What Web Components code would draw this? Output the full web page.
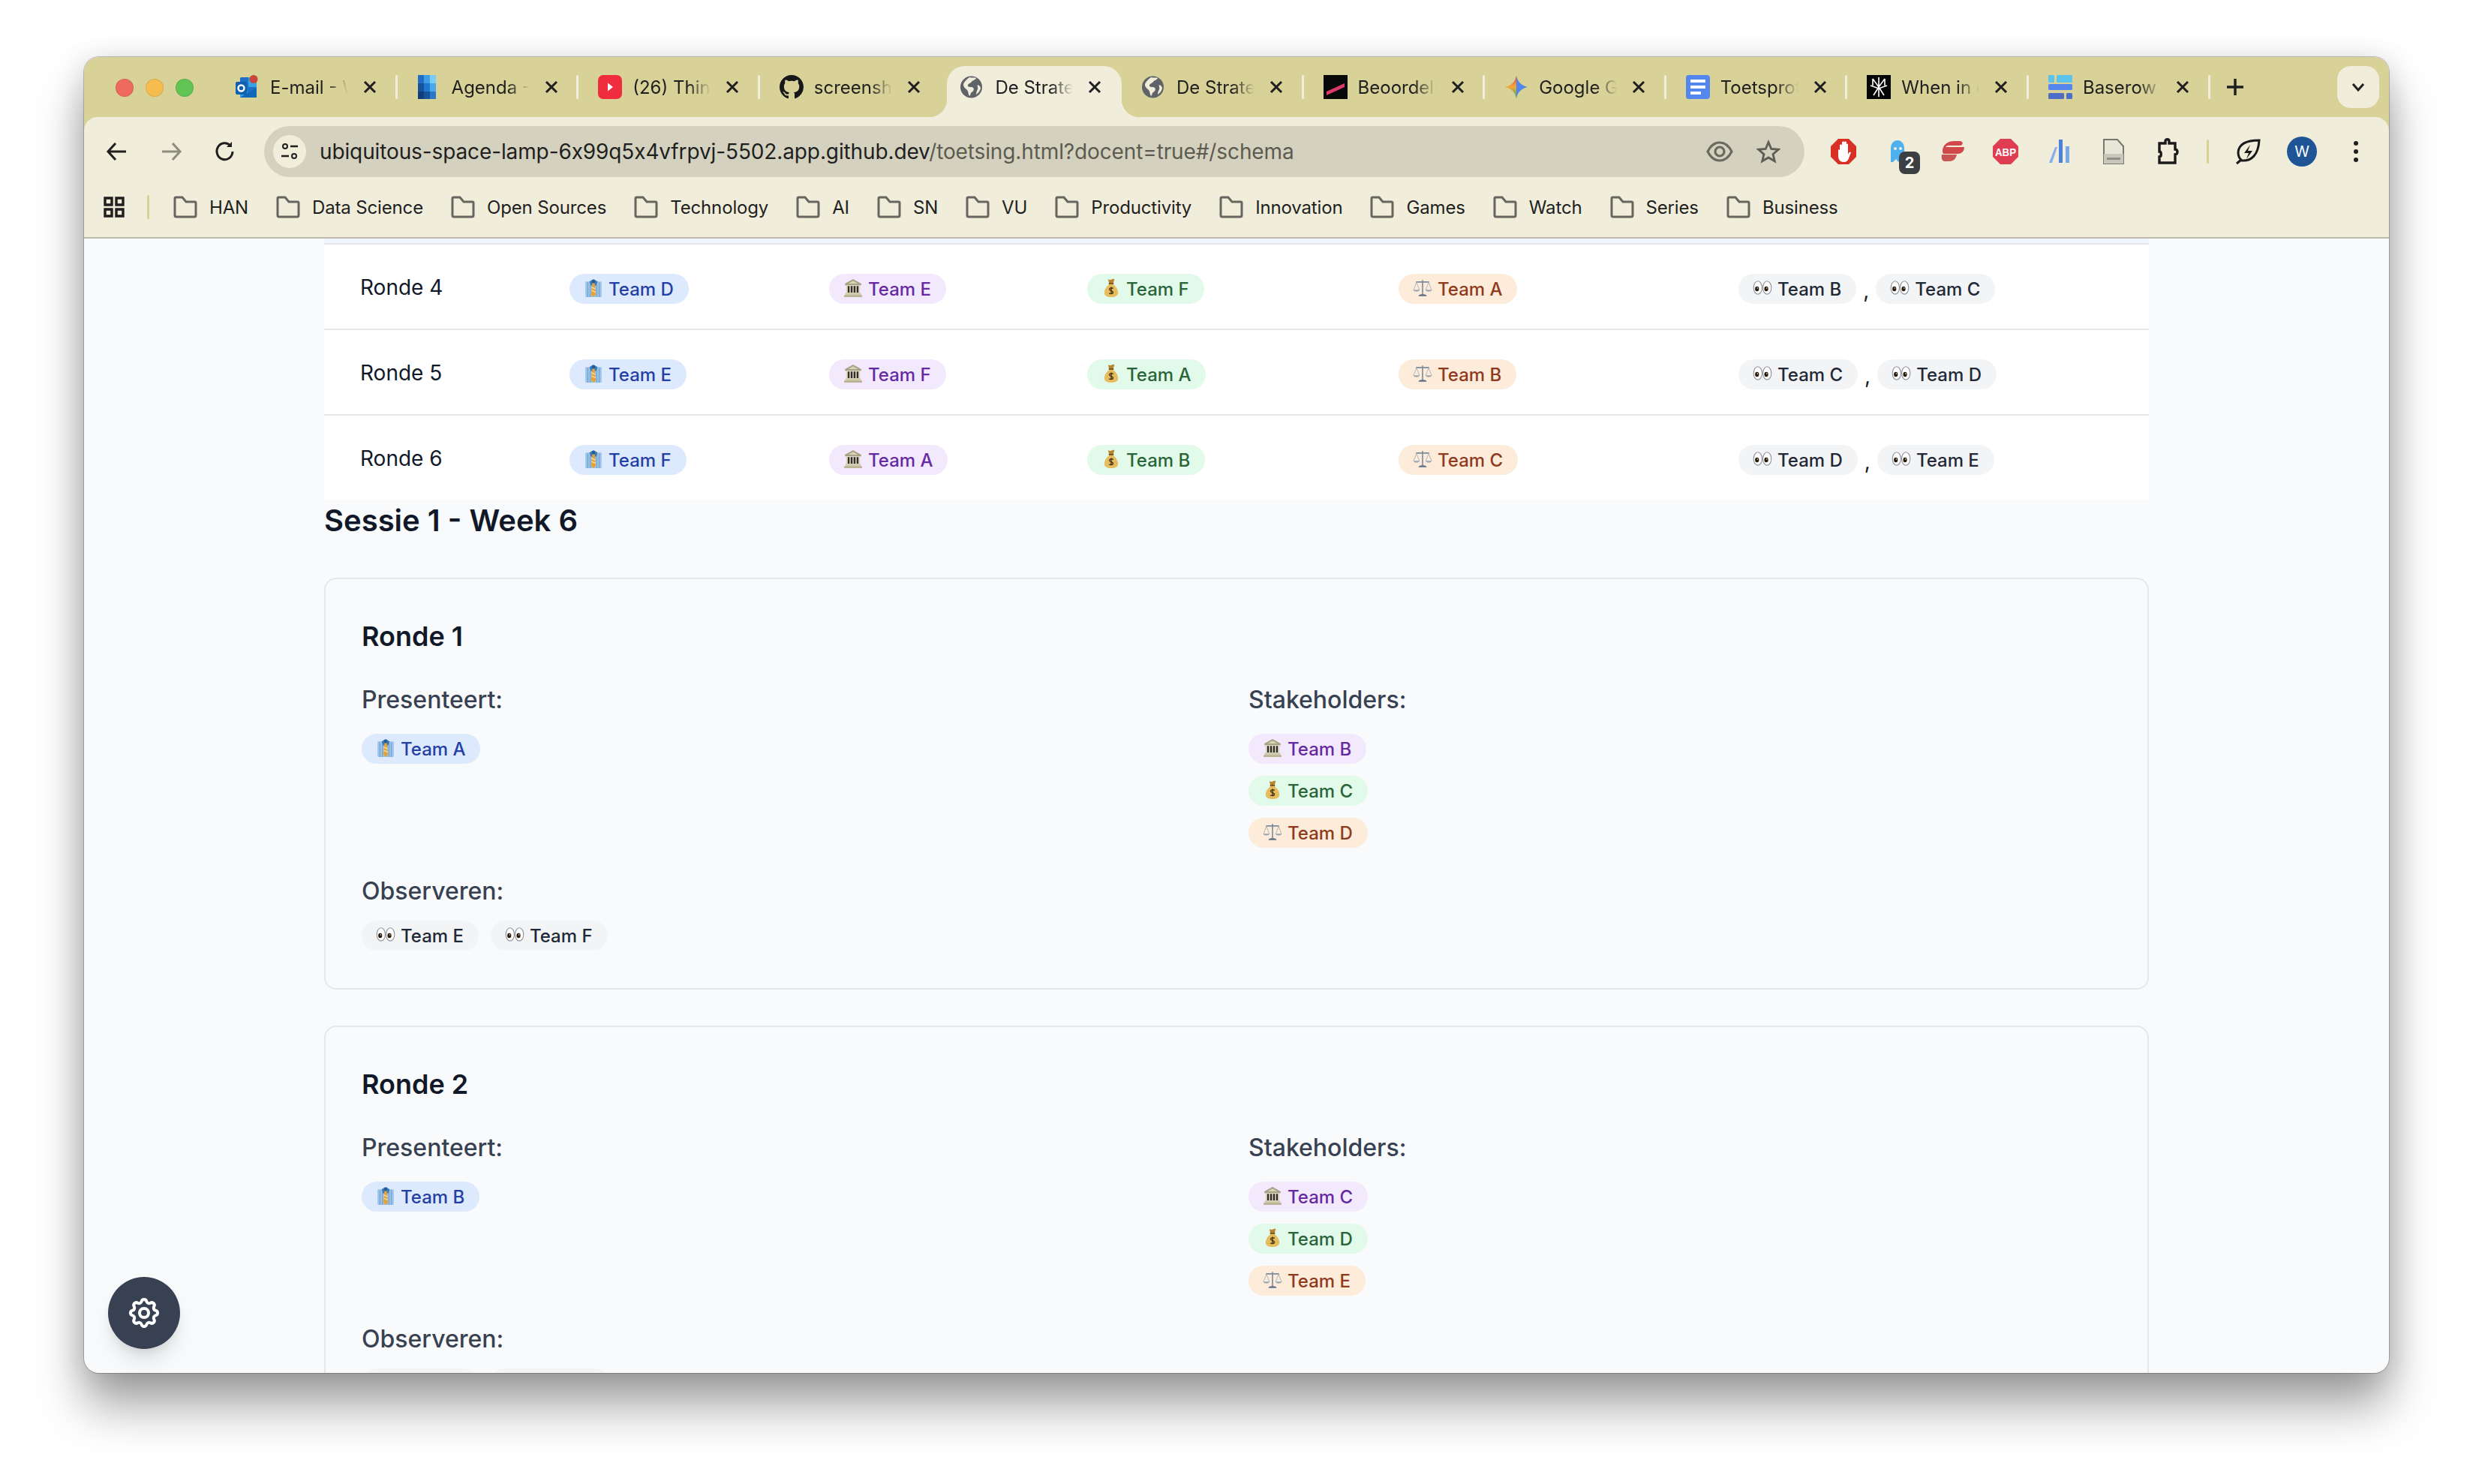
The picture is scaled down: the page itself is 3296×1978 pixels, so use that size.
<!DOCTYPE html>
<html lang="nl">
<head>
<meta charset="utf-8">
<title>De Strategie</title>
<style>
    html, body { margin: 0; background: #fff; }
    body { font-family: Inter, "Noto Sans", sans-serif; }
</style>
</head>
<body>
<browser-desktop>
  <browser-window>
    <tab-strip slot="tabs">
      <browser-tab icon="outlook" sep>E-mail - W</browser-tab>
      <browser-tab icon="agenda" sep>Agenda - W</browser-tab>
      <browser-tab icon="youtube" sep>(26) Thinking</browser-tab>
      <browser-tab icon="github">screenshot</browser-tab>
      <browser-tab icon="globe" active>De Strategie</browser-tab>
      <browser-tab icon="globe" sep>De Strategie</browser-tab>
      <browser-tab icon="beoordel" sep>Beoordeling</browser-tab>
      <browser-tab icon="gemini" sep>Google Gemini</browser-tab>
      <browser-tab icon="docs" sep>Toetsprotocol</browser-tab>
      <browser-tab icon="spider" sep>When in doubt</browser-tab>
      <browser-tab icon="baserow" sep>Baserow</browser-tab>
    </tab-strip>
    <browser-toolbar slot="toolbar">ubiquitous-space-lamp-6x99q5x4vfrpvj-5502.app.github.dev</browser-toolbar>
    <bookmark-bar slot="bookmarks">
      <book-mark>HAN</book-mark>
      <book-mark>Data Science</book-mark>
      <book-mark>Open Sources</book-mark>
      <book-mark>Technology</book-mark>
      <book-mark>AI</book-mark>
      <book-mark>SN</book-mark>
      <book-mark>VU</book-mark>
      <book-mark>Productivity</book-mark>
      <book-mark>Innovation</book-mark>
      <book-mark>Games</book-mark>
      <book-mark>Watch</book-mark>
      <book-mark>Series</book-mark>
      <book-mark>Business</book-mark>
    </bookmark-bar>

    <schedule-page>
      <round-table>
        <round-row name="Ronde 4" teams="D,E,F,A,B,C"></round-row>
        <round-row name="Ronde 5" teams="E,F,A,B,C,D"></round-row>
        <round-row name="Ronde 6" teams="F,A,B,C,D,E"></round-row>
      </round-table>
      <session-title>Sessie 1 - Week 6</session-title>
      <round-card name="Ronde 1" teams="A,B,C,D,E,F"></round-card>
      <round-card name="Ronde 2" teams="B,C,D,E,F,A"></round-card>
    </schedule-page>

    <settings-fab slot="overlay"></settings-fab>
  </browser-window>
</browser-desktop>

<script>
// icons for the tabs and the toolbar, all 32x32 unless the viewBox says otherwise
const ICONS = {
    outlook: `<svg viewBox="2 0 32 32"><rect x="8" y="3" width="22" height="27" rx="1.5" fill="#1f6fc4"/><rect x="19" y="3" width="11" height="13" fill="#37a2e6"/><path d="M8 16l11 7 11-7v14H8z" fill="#28a8ea"/><path d="M8 30l22-14v14z" fill="#1268b8"/><rect x="2" y="9" width="15" height="17" rx="2" fill="#0f5fb0"/><circle cx="9.5" cy="17.5" r="4" fill="none" stroke="#fff" stroke-width="2.4"/><circle cx="26" cy="5.5" r="5.5" fill="#c7453b"/></svg>`,
    agenda: `<svg viewBox="7 0 32 32"><rect x="8" y="0" width="8" height="11" rx="1" fill="#1f6fc4"/><rect x="16" y="0" width="8" height="11" fill="#3f9fe6"/><rect x="24" y="0" width="8" height="11" fill="#79cdf5"/><rect x="8" y="11" width="8" height="11" fill="#17539c"/><rect x="16" y="11" width="8" height="11" fill="#1f78cf"/><rect x="24" y="11" width="8" height="11" fill="#4aa9ea"/><rect x="8" y="22" width="8" height="10" fill="#123f7c"/><rect x="16" y="22" width="8" height="10" fill="#17539c"/><rect x="24" y="22" width="8" height="10" fill="#2a77cb"/></svg>`,
    youtube: `<svg viewBox="0 0 32 32"><rect x="0" y="0" width="32" height="32" rx="7" fill="#ee2e3f"/><path d="M13 10.5l7 5.5-7 5.5z" fill="#fff"/></svg>`,
    github: `<svg viewBox="0 0 16 16"><path fill="#16181c" d="M8 0C3.58 0 0 3.58 0 8c0 3.54 2.29 6.53 5.47 7.59.4.07.55-.17.55-.38 0-.19-.01-.82-.01-1.49-2.01.37-2.53-.49-2.69-.94-.09-.23-.48-.94-.82-1.13-.28-.15-.68-.52-.01-.53.63-.01 1.08.58 1.23.82.72 1.21 1.87.87 2.33.66.07-.52.28-.87.51-1.07-1.78-.2-3.64-.89-3.64-3.95 0-.87.31-1.59.82-2.15-.08-.2-.36-1.02.08-2.12 0 0 .67-.21 2.2.82.64-.18 1.32-.27 2-.27s1.36.09 2 .27c1.53-1.04 2.2-.82 2.2-.82.44 1.1.16 1.92.08 2.12.51.56.82 1.27.82 2.15 0 3.07-1.87 3.75-3.65 3.95.29.25.54.73.54 1.48 0 1.07-.01 1.93-.01 2.2 0 .21.15.46.55.38A8.01 8.01 0 0016 8c0-4.42-3.58-8-8-8z"/></svg>`,
    globe: `<svg viewBox="0 0 32 32"><circle cx="14.500" cy="16" r="14.500" fill="#5f6368"/><path d="M12 3c3 1 7 0 9 1-1 3-5 3-6 5s-5 2-5 5 5 1 7 3 0 5-2 6-1 4-3 5c-2-3-1-6-3-8s-5-4-5-7 5-8 8-10z" fill="#f0edda"/><path d="M23 13c2 1 4 2 4 5-1 3-3 6-6 8 0-3 1-5 2-7s-1-4 0-6z" fill="#f0edda"/></svg>`,
    beoordel: `<svg viewBox="0 0 32 32"><rect width="32" height="32" fill="#0a0a0a"/><path d="M4 22l24-11 0 5-24 11z" fill="#dc3b67"/></svg>`,
    gemini: `<svg viewBox="0 0 32 32"><defs><linearGradient id="g1" x1="0" y1="0" x2="0" y2="1"><stop offset="0" stop-color="#e8453c"/><stop offset=".5" stop-color="#f2a93b"/><stop offset="1" stop-color="#34a853"/></linearGradient></defs><path d="M16 1c1.5 8 6.500 13 15 15-8.500 2-13.500 7-15 15-1.500-8-6.500-13-15-15 8.500-2 13.500-7 15-15z" fill="url(#g1)"/><path d="M16 1c1.500 8 6.500 13 15 15-8.500 2-13.500 7-15 15z" fill="#4f86f0"/></svg>`,
    docs: `<svg viewBox="0 0 32 32"><rect width="32" height="32" rx="4" fill="#5487ee"/><rect x="6" y="6" width="20" height="4" fill="#fff"/><rect x="6" y="14" width="20" height="4" fill="#fff"/><rect x="6" y="22" width="14" height="4" fill="#fff"/></svg>`,
    spider: `<svg viewBox="0 0 32 32"><rect width="32" height="32" fill="#050505"/><path d="M16 3v26M8 5l8 11 8-11M5 14l11 4 11-4M9 27l7-11 7 11M8 5v9M24 5v9" stroke="#fff" stroke-width="1.600" fill="none"/></svg>`,
    baserow: `<svg viewBox="0 0 32 32"><rect width="8" height="10" rx="1.500" fill="#5cc3ec"/><rect x="11" width="21" height="10" rx="1.500" fill="#5cc3ec"/><rect y="12" width="32" height="8" rx="1.500" fill="#5487ee"/><rect y="24" width="21" height="8" rx="1.500" fill="#4f6cc8"/><rect x="24" y="24" width="8" height="8" rx="1.500" fill="#4f6cc8"/></svg>`
};

// the emoji in the team pills, drawn because no colour emoji font is installed
const EMOJI = {
    pres: `<svg viewBox="0 0 24 24"><rect x="2" y="4" width="20" height="19" rx="1" fill="#9cc4e8"/><path d="M5 5v18M8 5v18M16 5v18M19 5v18" stroke="#6f9fd0" stroke-width="1"/><path d="M7 4l5-3 5 3-2 5h-6z" fill="#3d79b4"/><path d="M10 2h4l-.5 4h-3z" fill="#245d96"/><path d="M10.500 6h3l1.500 14-3 3-3-3z" fill="#e2a33a"/><path d="M10 11l4 2M9.800 15l4.800 2" stroke="#fbe3a6" stroke-width="1.200"/></svg>`,
    gov: `<svg viewBox="0 0 24 24"><path d="M12 1l10 5.500v2H2v-2z" fill="#a9a184"/><path d="M12 3l6 3.500H6z" fill="#d9d3b8"/><rect x="3.500" y="8.500" width="17" height="10" fill="#ddd8c0"/><path d="M6.500 9.500v8M10.200 9.500v8M13.800 9.500v8M17.500 9.500v8" stroke="#2f2e28" stroke-width="2.200"/><rect x="2.500" y="18" width="19" height="2.500" fill="#cfc8a9"/><rect x="1" y="20.500" width="22" height="2.500" fill="#b9b192"/></svg>`,
    money: `<svg viewBox="0 0 24 24"><path d="M8 1c1.500 1 2.500 1 4 .5S15 .5 16 1l-1.500 5h-5z" fill="#b8842c"/><rect x="9" y="5.500" width="6" height="1.800" fill="#7d5518"/><path d="M9.500 7.300h5C18 10 20.500 14 20.500 17.500c0 4-3.500 5.500-8.500 5.500s-8.500-1.500-8.500-5.500C3.500 14 6 10 9.500 7.300z" fill="#e6bc5e"/><path d="M14.500 12.500c-.8-.9-4.600-1.200-4.800 1-.2 2.300 4.800 1.500 4.600 3.900-.2 2.100-4 1.800-4.900.8M12 10.500v9" fill="none" stroke="#4a3614" stroke-width="1.300"/></svg>`,
    law: `<svg viewBox="0 0 24 24"><path d="M12 2v18M4 4.500h16" stroke="#7d8a9b" stroke-width="1.500" fill="none"/><path d="M4.500 5L1 14M4.500 5L8 14M19.500 5L16 14M19.500 5L23 14" stroke="#a4aebb" stroke-width=".8" fill="none"/><path d="M.5 14h8c-.5 3-7.500 3-8 0zM15.500 14h8c-.5 3-7.500 3-8 0z" fill="#9aa6b5"/><path d="M7 22c0-2 2.500-2.500 5-2.500s5 .5 5 2.500z" fill="#5f6f84"/></svg>`,
    obs: `<svg viewBox="0 0 24 24"><ellipse cx="6.300" cy="11.500" rx="5.200" ry="8" fill="#fff" stroke="#8f9298" stroke-width="1"/><ellipse cx="17.700" cy="11.500" rx="5.200" ry="8" fill="#fff" stroke="#8f9298" stroke-width="1"/><ellipse cx="5.300" cy="13" rx="2.400" ry="3" fill="#2a1a0c"/><ellipse cx="16.700" cy="13" rx="2.400" ry="3" fill="#2a1a0c"/><circle cx="5.900" cy="12" r=".7" fill="#fff"/><circle cx="17.300" cy="12" r=".7" fill="#fff"/></svg>`
};

class BrowserDesktop extends HTMLElement {
    constructor() {
        super();
        this.attachShadow({mode: 'open'});
        this.shadowRoot.innerHTML = `
            <style>
                :host { display: block; box-sizing: border-box; width: 3296px; height: 1978px; padding: 76px 112px 148px; overflow: hidden; background: #fff; }
            </style>
            <slot></slot>
        `;
    }
}

class BrowserWindow extends HTMLElement {
    constructor() {
        super();
        this.attachShadow({mode: 'open'});
        this.shadowRoot.innerHTML = `
            <style>
                :host {
                    display: flex;
                    flex-direction: column;
                    position: relative;
                    height: 100%;
                    border-radius: 20px;
                    background: #f9fafb;
                    box-shadow: 0 0 0 1px rgba(0, 0, 0, .22), 0 44px 64px rgba(0, 0, 0, .36), 0 4px 40px rgba(0, 0, 0, .14);
                }
                #chrome { flex: none; border-radius: 20px 20px 0 0; overflow: hidden; background: #d8d198; border-bottom: 2px solid #bdbcab; }
                #page { flex: 1; min-height: 0; overflow: hidden; border-radius: 0 0 20px 20px; }
            </style>
            <div id="chrome">
                <slot name="tabs"></slot>
                <slot name="toolbar"></slot>
                <slot name="bookmarks"></slot>
            </div>
            <div id="page"><slot></slot></div>
            <slot name="overlay"></slot>
        `;
    }
}

class TabStrip extends HTMLElement {
    constructor() {
        super();
        this.attachShadow({mode: 'open'});
        this.shadowRoot.innerHTML = `
            <style>
                :host { display: flex; align-items: flex-start; height: 68px; padding-top: 12px; position: relative; }
                #lights { flex: none; display: flex; gap: 16px; width: 132px; padding: 17px 0 0 42px; }
                #lights i { width: 24px; height: 24px; border-radius: 50%; box-shadow: inset 0 0 0 1px rgba(0,0,0,.1); }
                #plus { flex: none; width: 32px; height: 32px; margin: 12px 0 0 19px; }
                #more { flex: none; display: flex; align-items: center; justify-content: center; width: 56px; height: 56px; margin-left: 120px; border-radius: 18px; background: #f0edda; }
                #more svg { width: 20px; height: 20px; }
            </style>
            <div id="lights"><i style="background:#ee6a5f"></i><i style="background:#f5bd4f"></i><i style="background:#61c454"></i></div>
            <slot></slot>
            <svg id="plus" viewBox="0 0 32 32"><path d="M16 5v22M5 16h22" stroke="#1f1f1f" stroke-width="3.500"/></svg>
            <div id="more"><svg viewBox="0 0 20 20"><path d="M3 6l7 8 7-8" fill="none" stroke="#1f1f1f" stroke-width="3"/></svg></div>
        `;
    }
}

class BrowserTab extends HTMLElement {
    connectedCallback() {
        if (this.shadowRoot) return;
        this.attachShadow({mode: 'open'});
        this.shadowRoot.innerHTML = `
            <style>
                :host { display: flex; flex: none; box-sizing: border-box; position: relative; align-items: center; width: 241.6px; height: 68px; padding: 0 0 12px 28px; color: #1f1f1f; font: 24px Inter, "Noto Sans", sans-serif; }
                :host([sep])::after { content: ""; position: absolute; right: -2px; top: 12px; width: 3px; height: 32px; border-radius: 2px; background: #f0edda; }
                #bg { display: none; position: absolute; top: 0; bottom: 0; left: 10px; right: -1px; border-radius: 24px 24px 0 0; background: #f0edda; }
                #bg::before, #bg::after { content: ""; position: absolute; bottom: 0; width: 24px; height: 24px; }
                #bg::before { left: -24px; background: radial-gradient(circle at 0 0, transparent 24px, #f0edda 24.5px); }
                #bg::after { right: -24px; background: radial-gradient(circle at 100% 0, transparent 24px, #f0edda 24.5px); }
                :host([active]) #bg { display: block; }
                #icon, #label, #close { position: relative; }
                #icon { flex: none; width: 32px; height: 32px; }
                #icon svg { display: block; width: 32px; height: 32px; }
                #label { flex: none; width: 104px; margin-left: 14px; overflow: hidden; white-space: nowrap; -webkit-mask-image: linear-gradient(to right, #000 72%, transparent); mask-image: linear-gradient(to right, #000 72%, transparent); }
                #close { flex: none; width: 18px; height: 18px; margin-left: 20px; }
            </style>
            <div id="bg"></div>
            <div id="icon">${ICONS[this.getAttribute('icon')]}</div>
            <div id="label"><slot></slot></div>
            <svg id="close" viewBox="0 0 18 18"><path d="M2 2l14 14M16 2L2 16" stroke="#1f1f1f" stroke-width="3"/></svg>
        `;
    }
}

class BrowserToolbar extends HTMLElement {
    constructor() {
        super();
        this.attachShadow({mode: 'open'});
        this.shadowRoot.innerHTML = `
            <style>
                :host { display: flex; align-items: center; height: 92px; box-sizing: border-box; padding: 12px 8px 12px; background: #f0edda; border-radius: 18px 18px 0 0; color: #1f1f1f; }
                .tool { flex: none; display: flex; align-items: center; justify-content: center; width: 72px; height: 68px; position: relative; }
                .tool svg { display: block; width: 36px; height: 36px; }
                #address { flex: 1; min-width: 0; display: flex; align-items: center; height: 68px; margin: 0 16px; padding: 0 0 0 12px; border-radius: 34px; background: #d4d2bf; font: 28px Inter, "Noto Sans", sans-serif; }
                #chip { flex: none; display: flex; align-items: center; justify-content: center; width: 44px; height: 44px; border-radius: 50%; background: #f0edda; }
                #url { flex: 1; margin-left: 18px; white-space: nowrap; letter-spacing: -.12px; }
                #url span { color: #5c5b50; }
                #end { display: flex; align-items: center; gap: 31px; padding-right: 32px; }
                #end svg { width: 36px; height: 36px; display: block; }
                #end svg + svg { width: 32px; height: 32px; }
                #divider { flex: none; width: 3px; height: 32px; margin: 0 16px 0 16px; background: #d8d198; border-radius: 2px; }
                #badge { position: absolute; left: 38px; top: 34px; width: 28px; height: 30px; border-radius: 8px; background: #3c4043; color: #fff; font: 700 20px/30px Inter, sans-serif; text-align: center; }
            </style>
            <div class="tool"><svg viewBox="0 0 36 36"><path d="M30 18H7M16 7L6 18l10 11" fill="none" stroke="#1f1f1f" stroke-width="3"/></svg></div>
            <div class="tool"><svg viewBox="0 0 36 36"><path d="M6 18h23M20 7l10 11-10 11" fill="none" stroke="#8d8c7f" stroke-width="3"/></svg></div>
            <div class="tool"><svg viewBox="0 0 36 36"><path d="M28 18a10.500 11 0 1 1-3-8" fill="none" stroke="#1f1f1f" stroke-width="3"/><path d="M27 5v7h-7z" fill="#1f1f1f"/></svg></div>
            <div id="address">
                <div id="chip"><svg viewBox="0 0 28 28" width="28" height="28"><circle cx="8" cy="7" r="3" fill="none" stroke="#1f1f1f" stroke-width="2"/><path d="M15 7h10M3 20h10" stroke="#1f1f1f" stroke-width="2.400"/><circle cx="20" cy="20" r="3" fill="none" stroke="#1f1f1f" stroke-width="2"/></svg></div>
                <div id="url"><slot></slot><span>/toetsing.html?docent=true#/schema</span></div>
                <div id="end">
                    <svg viewBox="0 0 36 36"><path d="M2 18c4-8 10-12 16-12s12 4 16 12c-4 8-10 12-16 12S6 26 2 18z" fill="none" stroke="#6b6a60" stroke-width="3.200"/><circle cx="18" cy="18" r="6" fill="none" stroke="#6b6a60" stroke-width="3.200"/></svg>
                    <svg viewBox="0 0 36 36"><path d="M18 4l4.200 10 10.800.9-8.200 7 2.500 10.500L18 27l-9.300 5.400L11.200 22 3 14.900l10.800-.9z" fill="none" stroke="#5f5e55" stroke-width="3.200"/></svg>
                </div>
            </div>
            <div class="tool"><svg viewBox="0 0 36 36"><path d="M11 1h14l10 10v14L25 35H11L1 25V11z" fill="#d93025"/><path d="M11 16v8c0 5 3 8 7 8s6-2 7-5l3-8c-2-1-3 0-4 3V9c0-2-2-2-2 0V6c0-2-3-2-3 0v0c0-2-3-2-3 0v4c0-2-3-2-3 0v7c0-2-2-2-2-1z" fill="#fff"/></svg></div>
            <div class="tool"><svg viewBox="0 0 36 36"><path d="M9 32V14C9 7 13 3 18 3s9 4 9 11v17l-4-3-4 4-3-4-4 4z" fill="#4fb0ee"/><circle cx="15" cy="14" r="2" fill="#f0edda"/><circle cx="22" cy="14" r="2" fill="#f0edda"/></svg><span id="badge">2</span></div>
            <div class="tool"><svg viewBox="0 0 36 36"><path d="M6 16c1-8 8-12 15-12h8c5 0 5 6 0 6H14c-2 0-3 1-4 2h25c0 6-4 9-9 9H8c-2 0-2-3-2-5z" fill="#d2484a"/><path d="M5 22h20c-1 5-4 9-10 9H9c-4 0-5-5-4-9z" fill="#c95552"/></svg></div>
            <div class="tool"><svg viewBox="0 0 36 36"><path d="M11 1h14l10 10v14L25 35H11L1 25V11z" fill="#df3e52"/><text x="18" y="24" text-anchor="middle" font-family="Liberation Sans" font-weight="700" font-size="15" textLength="28" lengthAdjust="spacingAndGlyphs" fill="#fff">ABP</text></svg></div>
            <div class="tool"><svg viewBox="0 0 36 36"><path d="M4 33L12 12h3L8 33z" fill="#88aef0"/><rect x="17" y="2" width="5" height="31" fill="#4a7fdb"/><rect x="26" y="11" width="5" height="22" fill="#7aa7ec"/></svg></div>
            <div class="tool"><svg viewBox="0 0 36 36"><path d="M5 2h18l8 9v23H5z" fill="#e8e6d6" stroke="#77776f" stroke-width="2"/><rect x="5" y="21" width="26" height="13" fill="#c8c7bb"/><rect x="9" y="26" width="18" height="3" fill="#8f8e85"/></svg></div>
            <div class="tool"><svg viewBox="0 0 36 36"><path d="M7 7h8V4c0-3 5-3 5 0v3h8v8c4 0 4 7 0 7v11H7v-8c3 0 3-7 0-7z" fill="none" stroke="#1a1a1a" stroke-width="3.400"/></svg></div>
            <div id="divider"></div>
            <div class="tool" style="margin-left:0"><svg viewBox="0 0 36 36"><path d="M33 3C20 3 6 6 5 19c0 4 1 8 5 11 12 1 22-7 23-27zM3 34l6-5" fill="none" stroke="#1a1a1a" stroke-width="3"/><path d="M21 9l-8 11h6l-3 8 8-11h-6z" fill="#1a1a1a"/></svg></div>
            <div class="tool"><svg viewBox="0 0 40 40" style="width:40px;height:40px"><circle cx="20" cy="20" r="20" fill="#1f5596"/><text x="20" y="27" text-anchor="middle" font-family="Inter" font-size="20" fill="#fff">W</text></svg></div>
            <div class="tool"><svg viewBox="0 0 36 36"><circle cx="18" cy="7" r="3" fill="#1f1f1f"/><circle cx="18" cy="18" r="3" fill="#1f1f1f"/><circle cx="18" cy="29" r="3" fill="#1f1f1f"/></svg></div>
        `;
    }
}

class BookmarkBar extends HTMLElement {
    constructor() {
        super();
        this.attachShadow({mode: 'open'});
        this.shadowRoot.innerHTML = `
            <style>
                :host { display: flex; align-items: center; box-sizing: border-box; height: 68px; padding: 0 0 12px 26px; background: #f0edda; }
                svg { flex: none; width: 28px; height: 28px; }
                #sep { flex: none; width: 3px; height: 32px; margin: 0 32px 0 30px; border-radius: 2px; background: #d8d198; }
                #marks { display: flex; align-items: center; gap: 37px; }
            </style>
            <svg viewBox="0 0 28 28"><path d="M2 2h9v9H2zM17 2h9v9h-9zM2 17h9v9H2zM17 17h9v9h-9z" fill="none" stroke="#1f1f1f" stroke-width="3.400"/></svg>
            <div id="sep"></div>
            <div id="marks"><slot></slot></div>
        `;
    }
}

class BookMark extends HTMLElement {
    constructor() {
        super();
        this.attachShadow({mode: 'open'});
        this.shadowRoot.innerHTML = `
            <style>
                :host { display: flex; align-items: center; gap: 16px; color: #1f1f1f; font: 24px Inter, "Noto Sans", sans-serif; letter-spacing: -.15px; white-space: nowrap; }
                svg { flex: none; width: 32px; height: 32px; }
            </style>
            <svg viewBox="0 0 32 32"><path d="M2 4.500A1.500 1.500 0 0 1 3.500 3H12l5 6h11.500A1.500 1.500 0 0 1 30 10.500V27a2 2 0 0 1-2 2H4a2 2 0 0 1-2-2z" fill="none" stroke="#66655f" stroke-width="3"/></svg>
            <slot></slot>
        `;
    }
}

class SchedulePage extends HTMLElement {
    constructor() {
        super();
        this.attachShadow({mode: 'open'});
        this.shadowRoot.innerHTML = `
            <style>
                :host { display: flex; flex-direction: column; box-sizing: border-box; width: 2432px; margin: 0 auto; color: #111827; font-family: Inter, "Noto Sans", sans-serif; }
            </style>
            <slot></slot>
        `;
    }
}

class RoundTable extends HTMLElement {
    constructor() {
        super();
        this.attachShadow({mode: 'open'});
        this.shadowRoot.innerHTML = `
            <style>
                /* the strip on top is the hovered row scrolled away */
                :host { display: block; background: #fff; border-top: 6px solid #eff6ff; }
            </style>
            <slot></slot>
        `;
    }
}

class TeamPill extends HTMLElement {
    connectedCallback() {
        if (this.shadowRoot) return;
        this.attachShadow({mode: 'open'});
        const kind = this.getAttribute('kind');
        this.shadowRoot.innerHTML = `
            <style>
                :host { display: inline-flex; flex: none; align-items: center; height: 40px; padding: 0 20px; border-radius: 20px; font: 500 24px Inter, "Noto Sans", sans-serif; white-space: nowrap; }
                :host([kind=pres]) { background: #dde9fc; color: #2440a4; }
                :host([kind=gov]) { background: #f2e9fd; color: #652aa2; }
                :host([kind=money]) { background: #e2faea; color: #2a6439; }
                :host([kind=law]) { background: #fcecd9; color: #8f3a1d; }
                :host([kind=obs]) { background: #f3f4f6; color: #1f2937; }
                svg { flex: none; width: 26px; height: 26px; margin: -3px 7px 0 -1px; }
            </style>
            ${EMOJI[kind]}<slot></slot>
        `;
    }
}

// fills in the teams of a round, order in the attribute: presenter, 3 stakeholders, 2 observers
function pills(teams, kinds) {
    return kinds.map((k, i) => `<team-pill kind="${k}">Team ${teams[i]}</team-pill>`);
}

class RoundRow extends HTMLElement {
    connectedCallback() {
        if (this.shadowRoot) return;
        this.attachShadow({mode: 'open'});
        const list = pills(this.getAttribute('teams').split(','), ['pres', 'gov', 'money', 'law', 'obs', 'obs']);
        this.shadowRoot.innerHTML = `
            <style>
                :host { display: grid; grid-template-columns: 279px 346px 344px 415px 453px 1fr; height: 114px; box-sizing: border-box; border-top: 2px solid #e5e7eb; color: #111827; font-size: 28px; }
                .cell { display: flex; align-items: center; padding: 1px 48px 0; }
                .cell.teams { padding-top: 6px; }
                #comma { margin: 0 9px; padding-top: 4px; }
            </style>
            <div class="cell">${this.getAttribute('name')}</div>
            <div class="cell teams">${list[0]}</div>
            <div class="cell teams">${list[1]}</div>
            <div class="cell teams">${list[2]}</div>
            <div class="cell teams">${list[3]}</div>
            <div class="cell teams">${list[4]}<span id="comma">,</span>${list[5]}</div>
        `;
    }
}

class SessionTitle extends HTMLElement {
    constructor() {
        super();
        this.attachShadow({mode: 'open'});
        this.shadowRoot.innerHTML = `
            <style>
                :host { display: block; margin-bottom: 48px; font-size: 40px; line-height: 56px; font-weight: 600; color: #111827; }
            </style>
            <slot></slot>
        `;
    }
}

class RoundCard extends HTMLElement {
    connectedCallback() {
        if (this.shadowRoot) return;
        this.attachShadow({mode: 'open'});
        const list = pills(this.getAttribute('teams').split(','), ['pres', 'gov', 'money', 'law', 'obs', 'obs']);
        this.shadowRoot.innerHTML = `
            <style>
                :host { display: block; flex: none; box-sizing: border-box; margin-bottom: 48px; padding: 48px 48px 50px; border: 2px solid #e5e7eb; border-radius: 16px; background: #f9fafb; }
                h3 { margin: 0 0 33px; font-size: 36px; line-height: 56px; font-weight: 600; color: #111827; }
                #grid { display: grid; grid-template-columns: 1fr 1fr; gap: 34px 32px; }
                h4 { margin: 0 0 21px; font-size: 32px; line-height: 48px; font-weight: 500; color: #374151; }
                h4.obs { margin-bottom: 15px; }
                .stack { display: flex; flex-direction: column; align-items: flex-start; gap: 16px; }
                .line { display: flex; gap: 16px; }
            </style>
            <h3>${this.getAttribute('name')}</h3>
            <div id="grid">
                <div><h4>Presenteert:</h4><div class="stack">${list[0]}</div></div>
                <div><h4>Stakeholders:</h4><div class="stack">${list[1]}${list[2]}${list[3]}</div></div>
                <div><h4 class="obs">Observeren:</h4><div class="line">${list[4]}${list[5]}</div></div>
            </div>
        `;
    }
}

class SettingsFab extends HTMLElement {
    constructor() {
        super();
        this.attachShadow({mode: 'open'});
        this.shadowRoot.innerHTML = `
            <style>
                :host { position: absolute; left: 32px; bottom: 32px; display: flex; align-items: center; justify-content: center; width: 96px; height: 96px; border-radius: 50%; background: #374151; box-shadow: 0 20px 30px -6px rgba(0, 0, 0, .12), 0 8px 12px -4px rgba(0, 0, 0, .08); }
                svg { width: 48px; height: 48px; }
            </style>
            <svg viewBox="0 0 24 24" fill="none" stroke="#fff" stroke-width="2" stroke-linecap="round" stroke-linejoin="round"><path d="M10.325 4.317c.426-1.756 2.924-1.756 3.35 0a1.724 1.724 0 002.573 1.066c1.543-.94 3.31.826 2.37 2.37a1.724 1.724 0 001.065 2.572c1.756.426 1.756 2.924 0 3.35a1.724 1.724 0 00-1.066 2.573c.94 1.543-.826 3.31-2.37 2.37a1.724 1.724 0 00-2.572 1.065c-.426 1.756-2.924 1.756-3.35 0a1.724 1.724 0 00-2.573-1.066c-1.543.94-3.31-.826-2.37-2.37a1.724 1.724 0 00-1.065-2.572c-1.756-.426-1.756-2.924 0-3.35a1.724 1.724 0 001.066-2.573c-.94-1.543.826-3.31 2.37-2.37.996.608 2.296.07 2.572-1.065z"/><path d="M15 12a3 3 0 11-6 0 3 3 0 016 0z"/></svg>
        `;
    }
}

customElements.define('browser-desktop', BrowserDesktop);
customElements.define('browser-window', BrowserWindow);
customElements.define('tab-strip', TabStrip);
customElements.define('browser-tab', BrowserTab);
customElements.define('browser-toolbar', BrowserToolbar);
customElements.define('bookmark-bar', BookmarkBar);
customElements.define('book-mark', BookMark);
customElements.define('schedule-page', SchedulePage);
customElements.define('round-table', RoundTable);
customElements.define('team-pill', TeamPill);
customElements.define('round-row', RoundRow);
customElements.define('session-title', SessionTitle);
customElements.define('round-card', RoundCard);
customElements.define('settings-fab', SettingsFab);
</script>
</body>
</html>
